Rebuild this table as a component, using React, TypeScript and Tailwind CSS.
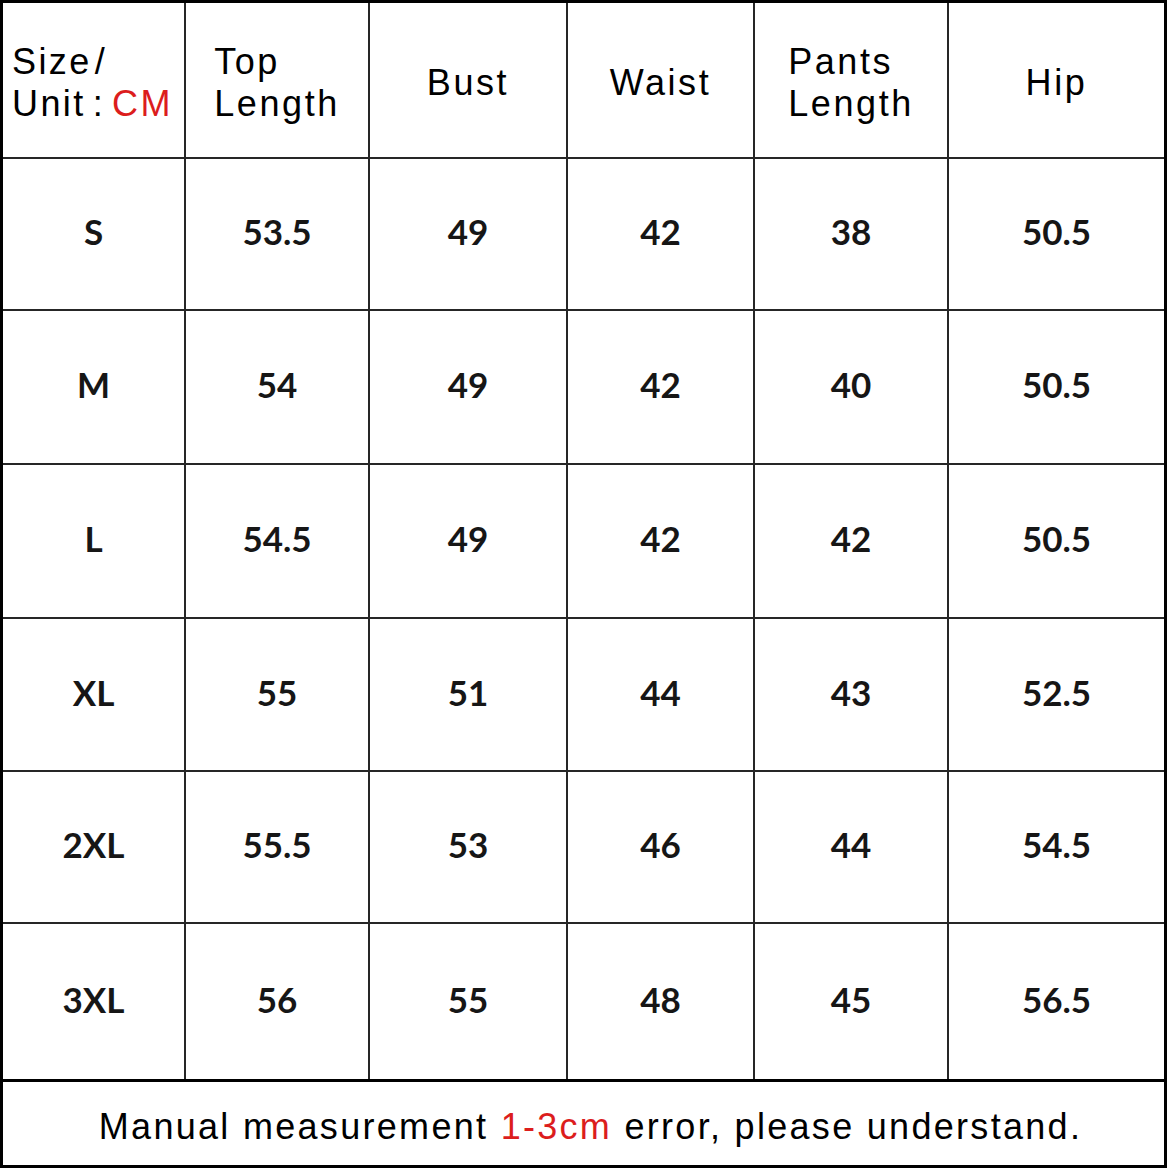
import React from "react";

// 尺碼表資料
const columns = ["Top Length", "Bust", "Waist", "Pants Length", "Hip"];

const rows: string[][] = [
  ["S", "53.5", "49", "42", "38", "50.5"],
  ["M", "54", "49", "42", "40", "50.5"],
  ["L", "54.5", "49", "42", "42", "50.5"],
  ["XL", "55", "51", "44", "43", "52.5"],
  ["2XL", "55.5", "53", "46", "44", "54.5"],
  ["3XL", "56", "55", "48", "45", "56.5"],
];

const headFont = { fontFamily: '"Liberation Sans", Arial, sans-serif' };
const cellFont = { fontFamily: 'Lato, "Open Sans", sans-serif' };

function HeadCell({ label }: { label: string }) {
  const words = label.split(" ");
  return (
    <div className="bg-white flex items-center justify-center">
      <div
        className="text-left text-[36px] leading-[42px] tracking-[2.6px] text-black pt-[6px]"
        style={headFont}
      >
        {words.map((w) => (
          <div key={w}>{w}</div>
        ))}
      </div>
    </div>
  );
}

export default function App() {
  return (
    <div className="w-[1167px] h-[1168px] bg-white border-[3px] border-black flex flex-col">
      {/* 表格本體：用 gap 當格線 */}
      <div className="grid grid-cols-[181px_182px_196px_185px_192px_215px] grid-rows-[154px_150px_152px_152px_151px_150px_155px] gap-[2px] bg-[#262626]">
        <div className="bg-white flex items-center pl-[9px]">
          <div
            className="text-[36px] leading-[42px] tracking-[2.4px] text-black pt-[6px]"
            style={headFont}
          >
            <div>
              Size<span className="ml-[3px] font-light">/</span>
            </div>
            <div>
              Unit<span className="mx-[7px]">:</span>
              <span className="text-[#dc1d1d]">CM</span>
            </div>
          </div>
        </div>
        {columns.map((c) => (
          <HeadCell key={c} label={c} />
        ))}

        {rows.map((r) =>
          r.map((v, i) => (
            <div
              key={r[0] + i}
              className="bg-white flex items-center justify-center pb-[5px] text-[35px] font-bold text-[#161616]"
              style={cellFont}
            >
              {v}
            </div>
          ))
        )}
      </div>

      {/* 備註列 */}
      <div className="flex-1 border-t-[3px] border-black flex items-center justify-center pl-[14px] pt-[6px]">
        <p
          className="text-[36px] tracking-[2.3px] text-black"
          style={headFont}
        >
          Manual measurement <span className="text-[#dc1d1d]">1-3cm</span> error, please understand.
        </p>
      </div>
    </div>
  );
}
